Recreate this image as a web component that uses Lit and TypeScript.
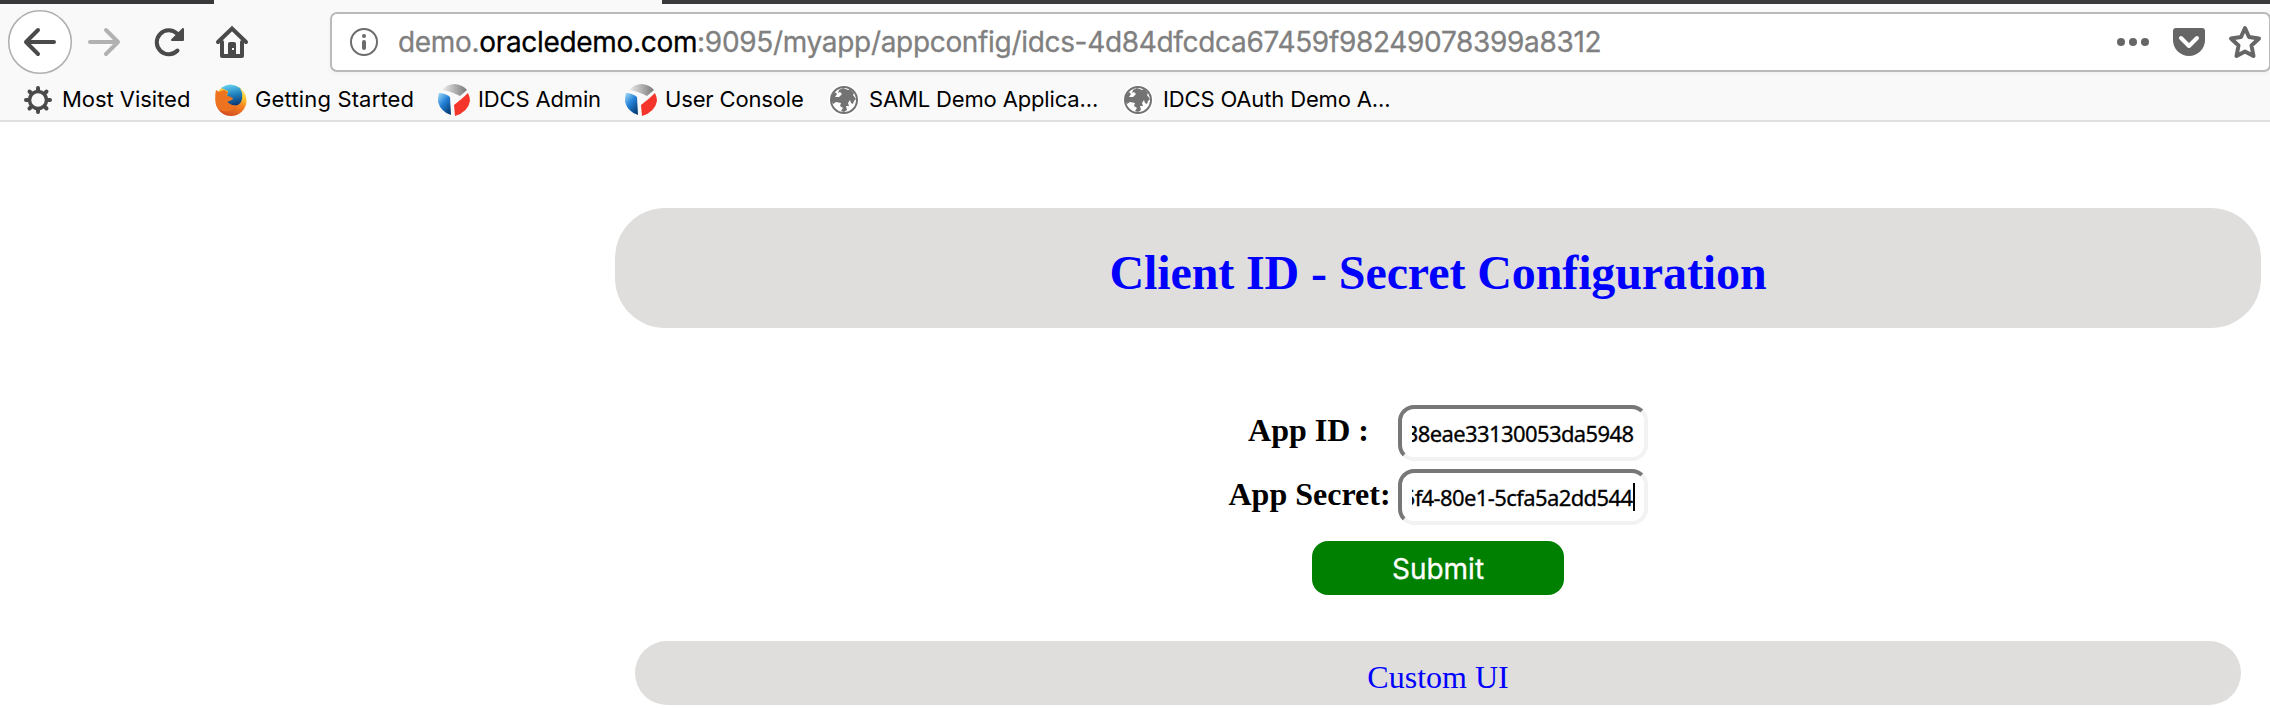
import { LitElement, html, css, svg } from "lit";
import { customElement } from "lit/decorators.js";

@customElement("app-root")
export class AppRoot extends LitElement {
  static styles = css`
    :host { display: block; width: 2270px; height: 708px; overflow: hidden; background: #fff; color: #000; }
    * { box-sizing: border-box; }
    svg { display: block; flex: none; overflow: visible; }
    .tabs { display: flex; height: 4px; background: #f9f9fa; }
    .tab-a { width: 214px; background: #39383a; }
    .tab-b { margin-left: 448px; flex: 1; background: #39383a; }
    .nav { height: 76px; background: #f9f9fa; display: flex; padding: 4px 0 4px 8px; align-items: center; }
    .url { margin-left: 82px; width: 1941px; height: 60px; flex: none; border: 2px solid #bababa; border-radius: 7px; background: #fff; display: flex; align-items: center; padding: 0 8px 0 18px; box-shadow: 0 2px 5px #0000000a; font-family: Inter, sans-serif; font-size: 28px; color: #808080; }
    .addr { margin-left: 20px; white-space: nowrap; flex: 1; letter-spacing: -.32px; -webkit-text-stroke: .3px; }
    .addr b { font-weight: 400; color: #000; }
    .marks { height: 42px; background: #f9f9fa; border-bottom: 2px solid #e0e0e1; display: flex; align-items: center; padding-left: 22px; font-family: Inter, sans-serif; font-size: 22px; white-space: nowrap; }
    .mark { display: flex; align-items: center; flex: none; }
    .mark span { letter-spacing: -.15px; padding-bottom: 2px; }
    .m1 { width: 193px; gap: 8px; } .m2 { width: 223px; gap: 8px; } .m3 { width: 187px; gap: 8px; }
    .m4 { width: 205px; gap: 8px; } .m5 { width: 294px; gap: 11px; } .m6 { gap: 11px; }
    .mark.m1 span { letter-spacing: -.04px; } .mark.m2 span { letter-spacing: .16px; }
    .page { margin: 86px 9px 0 615px; font-family: "Liberation Serif", serif; display: flex; flex-direction: column; align-items: center; }
    .banner { width: 100%; height: 120px; border-radius: 50px; background: #dfdedc; color: #00f; display: flex; justify-content: center; align-items: center; font-size: 48px; font-weight: 700; letter-spacing: -.1px; margin: 0; padding-top: 9px; }
    .form { margin-top: 77px; width: 419px; display: grid; grid-template-columns: 160px 250px; column-gap: 9px; row-gap: 8px; }
    .label { height: 56px; padding-top: 7px; line-height: 36px; text-align: center; font-size: 32px; font-weight: 700; white-space: nowrap; }
    .field { height: 56px; border: 4px solid; border-color: #777 #f2f2f2 #f2f2f2 #777; border-radius: 16px; background: #fff; padding: 0 10px; display: flex; align-items: center; justify-content: flex-end; font-family: "Noto Sans", sans-serif; font-size: 22px; -webkit-text-stroke: .3px; }
    .value { width: 222px; overflow: hidden; display: flex; justify-content: flex-end; white-space: nowrap; letter-spacing: -.6px; }
    .caret { width: 2px; height: 28px; background: #000; flex: none; margin-right: -1px; }
    .submit { margin-top: 16px; width: 252px; height: 54px; border: 0; border-radius: 16px; background: #008000; color: #fff; font-family: Inter, sans-serif; font-size: 28px; padding: 2px 0 0; -webkit-text-stroke: .3px; }
    .custom { margin: 46px 0 0; width: 1606px; height: 64px; border-radius: 32px; background: #dfdedc; color: #00f; font-size: 32px; display: flex; align-items: center; justify-content: center; padding-top: 8px; }
  `;

  private globe = svg`<circle cx="14" cy="14" r="15.500" fill="#fff"/><circle cx="14" cy="14" r="13" fill="#fff" stroke="#737373" stroke-width="2"/><path fill="#737373" d="M9 4 L13 2 18 4 20 3 24 7 23 9 26 13 24 15 23 18 21 17 20 14 18 17 19 20 16 20 17 24 14 26 11 25 13 22 10 20 11 17 6 16 3 18 1 14 2 9 5 6 7 8 5 11 9 11 12 8 10 6 8 7Z"/>`;

  private oracle() {
    return html`<svg width="32" height="32" viewBox="0 0 32 32">
      <defs><linearGradient id="g"><stop stop-color="#eee"/><stop offset="1" stop-color="#777"/></linearGradient>
      <linearGradient id="b" x2=".7" y2="1"><stop stop-color="#a6dcf7"/><stop offset=".5" stop-color="#2482d8"/><stop offset="1" stop-color="#063f79"/></linearGradient></defs>
      <path fill="url(#g)" d="M4 6 Q9 0 17 0 25 1 29 6 L22 12 Q12 7 4 6Z"/><path fill="url(#b)" d="M1 9 Q7 9 12 13 L13 31 Q3 28 0 18 0 12 1 9Z"/><path fill="#f5352b" d="M30 9 Q32 13 32 17 30 28 17 32 L16 21 Q24 15 30 9Z"/></svg>`;
  }

  private firefox() {
    return html`<svg width="32" height="32" viewBox="0 0 32 32">
      <defs><linearGradient id="f" x1=".75" y1="0" x2=".35" y2="1"><stop stop-color="#fff29a"/><stop offset=".3" stop-color="#fdc92f"/><stop offset=".55" stop-color="#f58220"/><stop offset="1" stop-color="#d34a20"/></linearGradient>
      <linearGradient id="s" x1=".4" x2=".6" y2="1"><stop stop-color="#63d0f2"/><stop offset=".5" stop-color="#1e80bd"/><stop offset="1" stop-color="#0a3874"/></linearGradient></defs>
      <circle cx="16" cy="16.500" r="15.500" fill="url(#f)"/><path fill="url(#s)" d="M6 4 Q15-3 25 4 29 11 26 18 22 24 15 20 L12 18 18 15 12 12 13 7Z"/><path fill="#ee7320" d="M1 6 L4 8 9 6 13 8 11 11 18 14 Q17 17 12 17 14 22 20 21 L17 26 Q8 30 2 23 -1 14 1 6Z"/></svg>`;
  }

  render() {
    return html`
      <div class="tabs"><div class="tab-a"></div><div class="tab-b"></div></div>
      <div class="nav">
        <svg width="240" height="64" viewBox="8 10 240 64" fill="none" stroke="#4a4a4b" stroke-width="4" stroke-linecap="round" stroke-linejoin="round">
          <circle cx="40" cy="42" r="31.3" fill="#fff" stroke="#b1b1b1" stroke-width="1.6"/>
          <path d="M54 42H26M38 30 26 42l12 12"/>
          <path stroke="#b1b1b1" d="M90 42h28M106 30l12 12-12 12"/>
          <path d="M177.500 50.500A12 12 0 1 1 177 33.500"/>
          <path fill="#4a4a4b" stroke-width="2" d="M183 29v11h-11l4-4z"/>
          <path stroke-linejoin="miter" d="M218 42 232 28.500 246 42"/><path d="M222 42v14h20V42"/>
          <path fill="#4a4a4b" stroke="none" d="M228 57V44q0-2 2-2h4q2 0 2 2v13z"/><path stroke="none" fill="#f9f9fa" d="M232 48h2v2h-2z"/>
        </svg>
        <div class="url">
          <svg width="28" height="28" viewBox="0 0 28 28"><circle cx="14" cy="14" r="13" fill="none" stroke="#6c6c6c" stroke-width="2"/><circle cx="14" cy="8" r="2" fill="#6c6c6c"/><path stroke="#6c6c6c" stroke-width="4" stroke-linecap="round" d="M14 14v6"/></svg>
          <div class="addr">demo.<b>oracledemo.com</b>:9095/myapp/appconfig/idcs-4d84dfcdca67459f98249078399a8312</div>
          <svg width="146" height="34" viewBox="2115 25 146 34" fill="#666">
            <circle cx="2121" cy="42" r="4"/><circle cx="2133" cy="42" r="4"/><circle cx="2145" cy="42" r="4"/>
            <path d="M2176 28h26q3 0 3 3v9a16 16 0 0 1-32 0v-9q0-3 3-3z"/><path fill="none" stroke="#fff" stroke-width="4" stroke-linecap="round" stroke-linejoin="round" d="m2181 38 8 8 8-8"/>
            <path fill="none" stroke="#666" stroke-width="4" stroke-linejoin="round" d="m2245 28 4 9 10 1.500-7.500 7 2 10.500-8.500-4.500-8.500 4.500 2-10.500-7.500-7 10-1.500z"/>
          </svg>
        </div>
      </div>
      <div class="marks">
        <div class="mark m1"><svg width="32" height="32" viewBox="0 0 32 32" fill="none" stroke="#4a4a4b" stroke-linecap="round"><circle cx="16" cy="16" r="8.500" stroke-width="3.500"/><path stroke-width="4" d="M16 4v2M16 26v2M4 16h2M26 16h2M7.500 7.500l1.500 1.500M23 23l1.500 1.500M24.500 7.500 23 9M9 23l-1.500 1.500"/></svg><span>Most Visited</span></div>
        <div class="mark m2">${this.firefox()}<span>Getting Started</span></div>
        <div class="mark m3">${this.oracle()}<span>IDCS Admin</span></div>
        <div class="mark m4">${this.oracle()}<span>User Console</span></div>
        <div class="mark m5"><svg width="28" height="28" viewBox="0 0 28 28">${this.globe}</svg><span>SAML Demo Applica...</span></div>
        <div class="mark m6"><svg width="28" height="28" viewBox="0 0 28 28">${this.globe}</svg><span>IDCS OAuth Demo A...</span></div>
      </div>
      <div class="page">
        <h1 class="banner">Client ID - Secret Configuration</h1>
        <div class="form">
          <div class="label">App ID :</div><div class="field"><div class="value">38eae33130053da5948</div></div>
          <div class="label">App Secret:</div><div class="field"><div class="value">5f4-80e1-5cfa5a2dd544</div><i class="caret"></i></div>
        </div>
        <button class="submit">Submit</button>
        <div class="custom">Custom UI</div>
      </div>`;
  }
}
